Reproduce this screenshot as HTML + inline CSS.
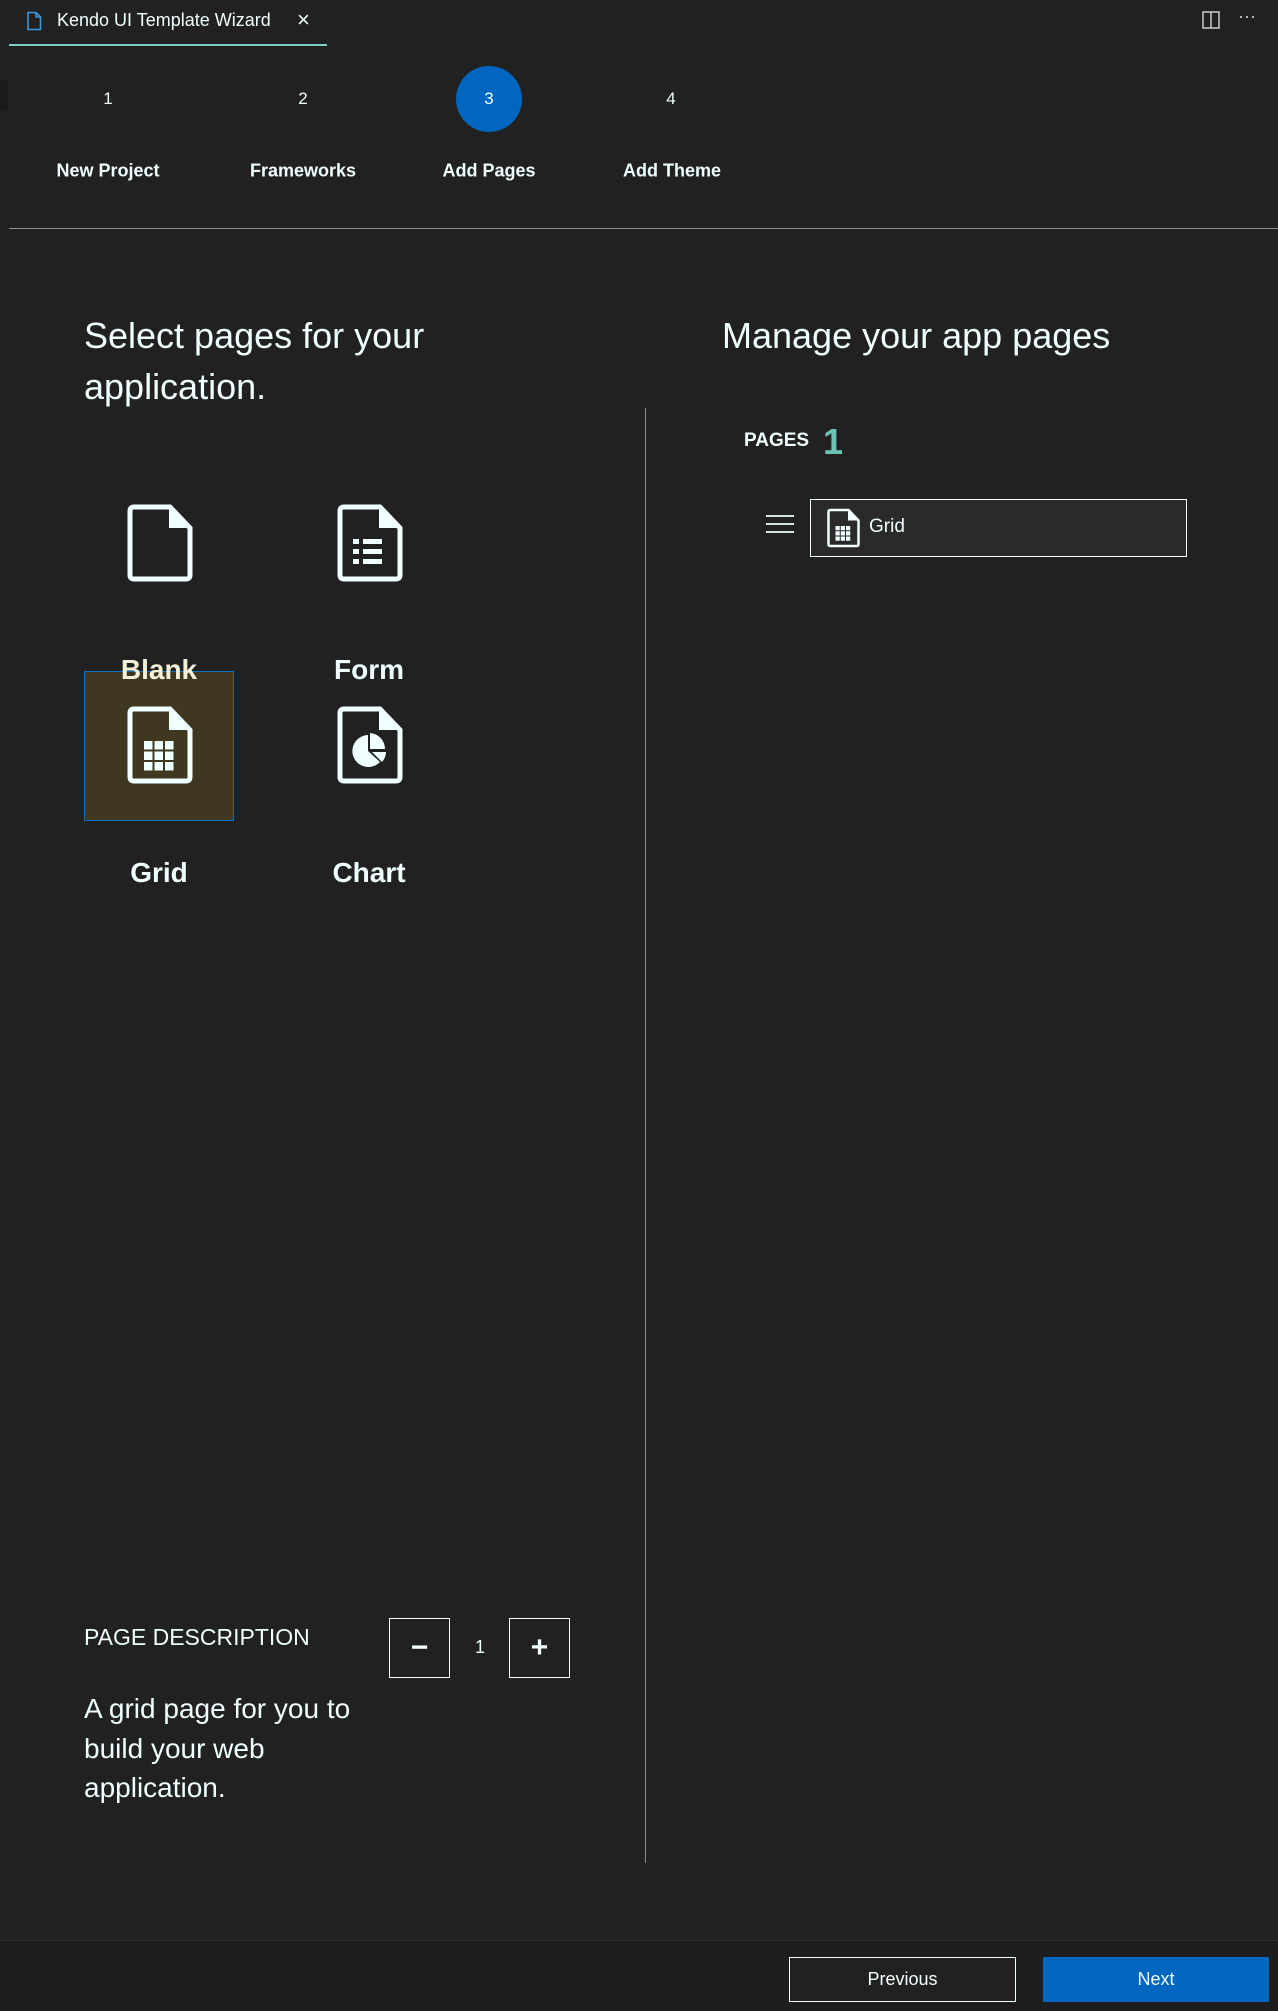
<!DOCTYPE html>
<html><head><meta charset="utf-8"><style>
*{margin:0;padding:0;box-sizing:border-box}
body{width:1278px;height:2011px;background:#212121;font-family:"Liberation Sans",sans-serif;color:#f0ffff;position:relative;overflow:hidden}
.a{position:absolute;white-space:nowrap}
.step{position:absolute;top:99px;transform:translate(-50%,-50%);font-size:17px}
.lbl{position:absolute;top:171px;transform:translate(-50%,-50%);font-size:18px;font-weight:bold}
.ic{position:absolute}
.il{position:absolute;transform:translate(-50%,-50%);font-size:28px;font-weight:bold}
.btn{position:absolute;border:1px solid #f0ffff;display:flex;align-items:center;justify-content:center}
</style></head><body>
<!-- tab -->
<svg class="a" style="left:26px;top:11px" width="16" height="20" viewBox="0 0 16 20"><path d="M2 1.5H10L14.5 6V18.5H2Z M10 1.5V6H14.5" fill="none" stroke="#3a96dd" stroke-width="1.6"/></svg>
<div class="a" style="left:57px;top:10px;font-size:18px">Kendo UI Template Wizard</div>
<div class="a" style="left:297px;top:7px;font-size:22px">×</div>
<div class="a" style="left:9px;top:44px;width:318px;height:2px;background:#7fcfc6"></div>
<svg class="a" style="left:1202px;top:11px" width="18" height="18"><rect x="1" y="1" width="16" height="16" fill="none" stroke="#ccc" stroke-width="1.5"/><line x1="9" y1="1" x2="9" y2="17" stroke="#ccc" stroke-width="1.5"/></svg>
<div class="a" style="left:1238px;top:6px;font-size:18px;color:#ccc">···</div>
<div class="a" style="left:0;top:80px;width:8px;height:30px;background:#1a1a1a"></div>
<!-- steps -->
<div class="a" style="left:456px;top:66px;width:66px;height:66px;border-radius:50%;background:#0066bf"></div>
<div class="step" style="left:108px">1</div>
<div class="step" style="left:303px">2</div>
<div class="step" style="left:489px">3</div>
<div class="step" style="left:671px">4</div>
<div class="lbl" style="left:108px">New Project</div>
<div class="lbl" style="left:303px">Frameworks</div>
<div class="lbl" style="left:489px">Add Pages</div>
<div class="lbl" style="left:672px">Add Theme</div>
<div class="a" style="left:9px;top:228px;width:1269px;height:1px;background:#8a8a8a"></div>
<!-- headings -->
<div class="a" style="left:84px;top:310px;font-size:36px;line-height:51px;white-space:normal;width:440px">Select pages for your application.</div>
<div class="a" style="left:722px;top:310px;font-size:36px;line-height:51px">Manage your app pages</div>
<div class="a" style="left:645px;top:408px;width:1px;height:1455px;background:#8a8a8a"></div>
<!-- tiles -->
<div class="a" style="left:84px;top:671px;width:150px;height:150px;background:#3f3720;border:1px solid #0e70c0"></div>
<svg class="ic" style="left:125px;top:504px" width="68" height="78" viewBox="0 0 68 78"><path d="M5 7Q5 3 9 3H45L65 24V71Q65 75 61 75H9Q5 75 5 71Z" fill="none" stroke="#f0ffff" stroke-width="5"/><path d="M44 3L65 24H44Z" fill="#f0ffff"/></svg>
<svg class="ic" style="left:335px;top:504px" width="68" height="78" viewBox="0 0 68 78"><path d="M5 7Q5 3 9 3H45L65 24V71Q65 75 61 75H9Q5 75 5 71Z" fill="none" stroke="#f0ffff" stroke-width="5"/><path d="M44 3L65 24H44Z" fill="#f0ffff"/><g fill="#f0ffff"><rect x="18" y="35" width="6" height="5"/><rect x="28" y="35" width="19" height="5"/><rect x="18" y="45" width="6" height="5"/><rect x="28" y="45" width="19" height="5"/><rect x="18" y="55" width="6" height="5"/><rect x="28" y="55" width="19" height="5"/></g></svg>
<svg class="ic" style="left:125px;top:706px" width="68" height="78" viewBox="0 0 68 78"><path d="M5 7Q5 3 9 3H45L65 24V71Q65 75 61 75H9Q5 75 5 71Z" fill="none" stroke="#f0ffff" stroke-width="5"/><path d="M44 3L65 24H44Z" fill="#f0ffff"/><g fill="#f0ffff"><rect x="19" y="35" width="8.5" height="8.5"/><rect x="29.5" y="35" width="8.5" height="8.5"/><rect x="40" y="35" width="8.5" height="8.5"/><rect x="19" y="45.5" width="8.5" height="8.5"/><rect x="29.5" y="45.5" width="8.5" height="8.5"/><rect x="40" y="45.5" width="8.5" height="8.5"/><rect x="19" y="56" width="8.5" height="8.5"/><rect x="29.5" y="56" width="8.5" height="8.5"/><rect x="40" y="56" width="8.5" height="8.5"/></g></svg>
<svg class="ic" style="left:335px;top:706px" width="68" height="78" viewBox="0 0 68 78"><path d="M5 7Q5 3 9 3H45L65 24V71Q65 75 61 75H9Q5 75 5 71Z" fill="none" stroke="#f0ffff" stroke-width="5"/><path d="M44 3L65 24H44Z" fill="#f0ffff"/><path d="M33 45V29A16 16 0 1 0 45 56Z" fill="#f0ffff"/><path d="M35 27A16 16 0 0 1 50 43H35Z" fill="#f0ffff"/><path d="M37 46H51A16 16 0 0 1 47 56Z" fill="#f0ffff"/></svg>
<div class="il" style="left:159px;top:670px;color:#f3f0d8">Blank</div>
<div class="il" style="left:369px;top:670px">Form</div>
<div class="il" style="left:159px;top:873px">Grid</div>
<div class="il" style="left:369px;top:873px">Chart</div>
<!-- right -->
<div class="a" style="left:744px;top:430px;font-size:19px;font-weight:bold">PAGES</div>
<div class="a" style="left:823px;top:421px;font-size:36px;font-weight:bold;color:#6cc4b7">1</div>
<svg class="a" style="left:766px;top:514px" width="30" height="22"><g stroke="#f0ffff" stroke-width="1.8"><line x1="0" y1="2" x2="28" y2="2"/><line x1="0" y1="10" x2="28" y2="10"/><line x1="0" y1="18" x2="28" y2="18"/></g></svg>
<div class="a" style="left:810px;top:499px;width:377px;height:58px;background:#2a2a2a;border:1.5px solid #f0ffff"></div>
<svg class="a" style="left:826px;top:508px" width="34" height="40" viewBox="0 0 68 78"><path d="M5 7Q5 3 9 3H45L65 24V71Q65 75 61 75H9Q5 75 5 71Z" fill="none" stroke="#f0ffff" stroke-width="5"/><path d="M44 3L65 24H44Z" fill="#f0ffff"/><g fill="#f0ffff"><rect x="19" y="35" width="8.5" height="8.5"/><rect x="29.5" y="35" width="8.5" height="8.5"/><rect x="40" y="35" width="8.5" height="8.5"/><rect x="19" y="45.5" width="8.5" height="8.5"/><rect x="29.5" y="45.5" width="8.5" height="8.5"/><rect x="40" y="45.5" width="8.5" height="8.5"/><rect x="19" y="56" width="8.5" height="8.5"/><rect x="29.5" y="56" width="8.5" height="8.5"/><rect x="40" y="56" width="8.5" height="8.5"/></g></svg>
<div class="a" style="left:869px;top:516px;font-size:19px">Grid</div>
<!-- description -->
<div class="a" style="left:84px;top:1624px;font-size:23px">PAGE DESCRIPTION</div>
<div class="btn" style="left:389px;top:1618px;width:61px;height:60px;font-size:30px;font-weight:bold">−</div>
<div class="a" style="left:475px;top:1637px;font-size:18px">1</div>
<div class="btn" style="left:509px;top:1618px;width:61px;height:60px;font-size:30px;font-weight:bold">+</div>
<div class="a" style="left:84px;top:1689px;font-size:28px;line-height:39.5px;white-space:normal;width:320px">A grid page for you to build your web application.</div>
<!-- footer -->
<div class="a" style="left:0;top:1940px;width:1278px;height:71px;background:#1e1e1e;border-top:1px solid #2c2c2c"></div>
<div class="btn" style="left:789px;top:1957px;width:227px;height:45px;font-size:18px;background:#212121">Previous</div>
<div class="btn" style="left:1043px;top:1957px;width:226px;height:45px;font-size:18px;background:#0066bf;border-color:#0066bf">Next</div>
</body></html>
